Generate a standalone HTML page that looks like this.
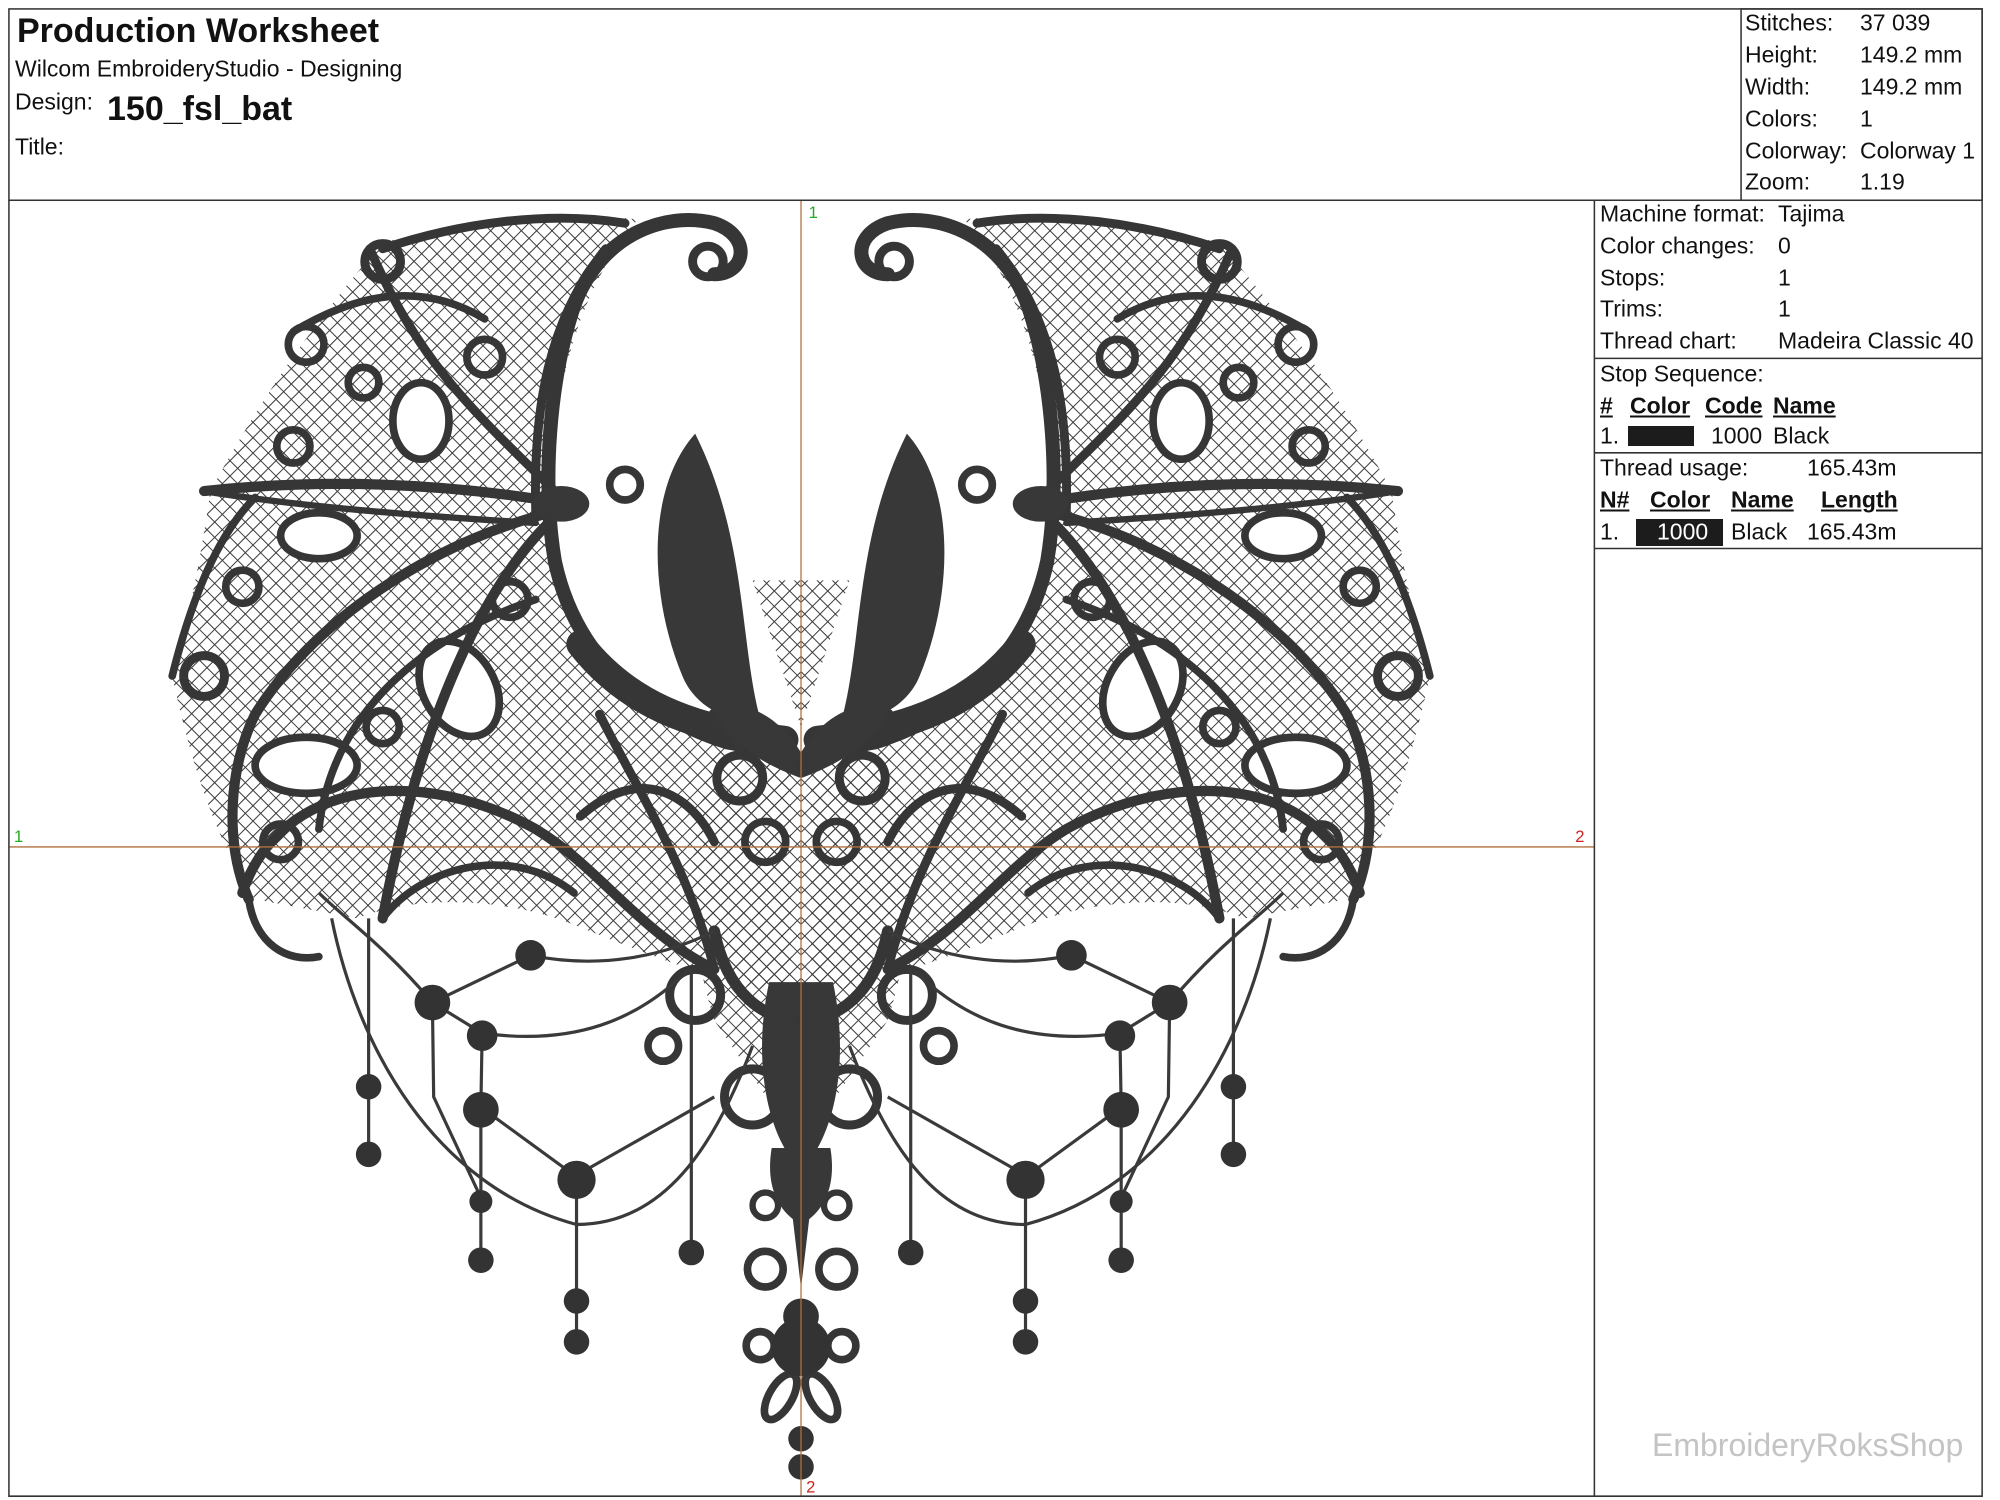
<!DOCTYPE html>
<html><head><meta charset="utf-8"><style>
html,body{margin:0;padding:0;background:#fff;}
body{width:2000px;height:1500px;position:relative;overflow:hidden;font-family:"Liberation Sans",Arial,sans-serif;color:#111;}
.t{position:absolute;white-space:nowrap;font-size:23px;line-height:23px;transform:translateY(-50%);}
.b{font-weight:bold;}
.u{text-decoration:underline;font-weight:bold;}
svg{position:absolute;left:0;top:0;}
</style></head><body>
<svg width="2000" height="1500" viewBox="0 0 1568 1176" preserveAspectRatio="none">
<defs>
<pattern id="m" width="8.5" height="8.5" patternUnits="userSpaceOnUse" patternTransform="rotate(45)">
<path d="M0 0H8.5M0 0V8.5" stroke="#3a3a3a" stroke-width="1.6" fill="none"/>
</pattern>
<g id="half">
<path d="M300,190 C360,175 440,165 500,172 C460,220 440,280 432,360 C428,450 450,520 540,575 L620,600 L620,780 C560,770 500,745 450,725 C400,705 330,700 280,720 L200,705 C170,660 150,600 135,530 C150,480 160,420 165,385 C200,320 240,260 300,190 Z" fill="url(#m)"/>
<path d="M590,455 L628,455 L628,570 Z" fill="url(#m)"/>
<path d="M560,590 C540,650 535,720 560,800 L628,900 L628,590 Z" fill="url(#m)"/>
<g fill="#fff" stroke="#363636" stroke-width="6">
<ellipse cx="250" cy="420" rx="30" ry="18"/>
<ellipse cx="360" cy="540" rx="28" ry="40" transform="rotate(-30 360 540)"/>
<ellipse cx="240" cy="600" rx="40" ry="22"/>
<ellipse cx="330" cy="330" rx="22" ry="30"/>
</g>
<g fill="none" stroke="#363636" stroke-linecap="round">
<path d="M560,215 C585,215 590,185 560,175 C520,165 470,185 450,240 C430,300 425,380 435,440 C450,510 500,560 570,582 L620,590" stroke-width="11"/>
<path d="M455,505 C490,550 540,572 615,580" stroke-width="22"/>
<path d="M475,195 C430,250 418,320 420,400" stroke-width="7"/>
<path d="M300,195 C360,175 430,165 490,175" stroke-width="7"/>
<path d="M445,395 Q300,370 160,385" stroke-width="8"/>
<path d="M160,385 Q250,400 420,410" stroke-width="5"/>
<path d="M440,400 C350,420 250,480 200,560 C180,600 175,660 195,705" stroke-width="8"/>
<path d="M445,395 C380,330 330,290 290,195" stroke-width="7"/>
<path d="M430,410 C380,460 330,560 300,720" stroke-width="8"/>
<path d="M420,470 C330,500 260,560 250,650" stroke-width="6"/>
<path d="M190,700 C220,610 330,600 420,650 C470,680 500,730 560,760" stroke-width="8"/>
<path d="M300,720 C330,680 400,660 450,700" stroke-width="6"/>
<path d="M135,530 C150,470 170,420 200,390" stroke-width="6"/>
<path d="M230,260 C280,230 330,220 380,250" stroke-width="6"/>
<path d="M470,560 C500,620 540,680 560,760" stroke-width="7"/>
<path d="M455,640 C500,600 540,620 560,660" stroke-width="7"/>
<path d="M195,705 C200,740 225,755 250,750" stroke-width="6"/>
<circle cx="555" cy="205" r="12" stroke-width="7"/>
<circle cx="300" cy="205" r="14" stroke-width="7"/>
<circle cx="240" cy="270" r="14" stroke-width="6"/>
<circle cx="230" cy="350" r="13" stroke-width="6"/>
<circle cx="160" cy="530" r="16" stroke-width="7"/>
<circle cx="190" cy="460" r="13" stroke-width="6"/>
<circle cx="300" cy="570" r="13" stroke-width="6"/>
<circle cx="490" cy="380" r="12" stroke-width="6"/>
<circle cx="380" cy="280" r="14" stroke-width="6"/>
<circle cx="285" cy="300" r="12" stroke-width="6"/>
<circle cx="400" cy="470" r="14" stroke-width="6"/>
<circle cx="220" cy="660" r="14" stroke-width="6"/>
<circle cx="580" cy="610" r="18" stroke-width="7"/>
<circle cx="600" cy="660" r="16" stroke-width="6"/>
<circle cx="545" cy="780" r="20" stroke-width="7"/>
<circle cx="520" cy="820" r="12" stroke-width="6"/>
<circle cx="590" cy="860" r="22" stroke-width="7"/>
<circle cx="600" cy="945" r="10" stroke-width="5"/>
<circle cx="600" cy="995" r="14" stroke-width="6"/>
<circle cx="596" cy="1055" r="11" stroke-width="6"/>
<ellipse cx="612" cy="1095" rx="9" ry="20" transform="rotate(30 612 1095)" stroke-width="6"/>
<path d="M560,730 C570,780 600,800 628,800" stroke-width="9"/>
<path d="M560,560 C580,570 600,590 628,600" stroke-width="9"/>
</g>
<g fill="#383838">
<ellipse cx="440" cy="395" rx="22" ry="14"/>
<path d="M545,340 C505,385 510,470 535,530 C545,555 575,570 595,560 C580,500 585,420 545,340 Z"/>
<path d="M560,560 C580,545 610,560 628,590 L628,610 C600,600 575,585 560,560 Z"/>
<path d="M603,770 C592,820 598,870 615,900 L628,1010 L628,770 Z"/>
<path d="M605,900 C600,930 610,950 628,960 L628,900 Z"/>
</g>
<g fill="none" stroke="#3a3a3a" stroke-width="2.5">
<path d="M289,720 L289,902"/>
<path d="M377,868 L377,985"/>
<path d="M452,922 L452,1048"/>
<path d="M542,760 L542,978"/>
<path d="M339,786 L416,749"/>
<path d="M339,786 L378,810 L377,868 L451,922 L560,860"/>
<path d="M260,720 C280,820 340,930 452,960 C520,960 560,900 590,820"/>
<path d="M339,786 C300,740 270,720 250,700"/>
<path d="M416,749 C470,760 520,750 560,730"/>
<path d="M378,810 C450,820 500,800 540,760"/>
<path d="M339,786 L340,860 L377,939"/>
</g>
<g fill="#333">
<circle cx="339" cy="786" r="14"/><circle cx="416" cy="749" r="12"/>
<circle cx="378" cy="812" r="12"/><circle cx="377" cy="870" r="14"/>
<circle cx="377" cy="942" r="9"/><circle cx="377" cy="988" r="10"/>
<circle cx="289" cy="852" r="10"/><circle cx="289" cy="905" r="10"/>
<circle cx="452" cy="925" r="15"/><circle cx="452" cy="1020" r="10"/>
<circle cx="452" cy="1052" r="10"/><circle cx="542" cy="982" r="10"/>
</g>
</g>
</defs>
<use href="#half"/>
<use href="#half" transform="translate(1256,0) scale(-1,1)"/>
<g fill="#333">
<circle cx="628" cy="1056" r="23"/><circle cx="628" cy="1032" r="14"/>
<circle cx="628" cy="1128" r="10"/><circle cx="628" cy="1150" r="10"/>
</g>
<line x1="628" y1="157" x2="628" y2="1173" stroke="#b07040" stroke-width="1"/>
<line x1="7" y1="664" x2="1250" y2="664" stroke="#b07040" stroke-width="1"/>
<g fill="none" stroke="#333" stroke-width="1.2">
<rect x="7" y="7" width="1547" height="150"/>
<rect x="1365" y="7" width="189" height="150"/>
<path d="M7,157 V1173 H1554 V157 M1250,157 V1173 M1250,281 H1554 M1250,355 H1554 M1250,430 H1554"/>
</g>
<text x="634" y="171" fill="#2a2" font-size="13" font-family="Liberation Sans">1</text>
<text x="11" y="660" fill="#2a2" font-size="13" font-family="Liberation Sans">1</text>
<text x="1235" y="660" fill="#c22" font-size="13" font-family="Liberation Sans">2</text>
<text x="632" y="1170" fill="#c22" font-size="13" font-family="Liberation Sans">2</text>
</svg>

<div class="t b" style="left:17px;top:31px;font-size:34px;line-height:34px">Production Worksheet</div>
<div class="t" style="left:15px;top:69px">Wilcom EmbroideryStudio - Designing</div>
<div class="t" style="left:15px;top:102px">Design:</div>
<div class="t b" style="left:107px;top:109px;font-size:34px;line-height:34px">150_fsl_bat</div>
<div class="t" style="left:15px;top:147px">Title:</div>

<div class="t" style="left:1745px;top:23px">Stitches:</div><div class="t" style="left:1860px;top:23px">37 039</div>
<div class="t" style="left:1745px;top:55px">Height:</div><div class="t" style="left:1860px;top:55px">149.2 mm</div>
<div class="t" style="left:1745px;top:87px">Width:</div><div class="t" style="left:1860px;top:87px">149.2 mm</div>
<div class="t" style="left:1745px;top:119px">Colors:</div><div class="t" style="left:1860px;top:119px">1</div>
<div class="t" style="left:1745px;top:151px">Colorway:</div><div class="t" style="left:1860px;top:151px">Colorway 1</div>
<div class="t" style="left:1745px;top:182px">Zoom:</div><div class="t" style="left:1860px;top:182px">1.19</div>

<div class="t" style="left:1600px;top:214px">Machine format:</div><div class="t" style="left:1778px;top:214px">Tajima</div>
<div class="t" style="left:1600px;top:246px">Color changes:</div><div class="t" style="left:1778px;top:246px">0</div>
<div class="t" style="left:1600px;top:278px">Stops:</div><div class="t" style="left:1778px;top:278px">1</div>
<div class="t" style="left:1600px;top:309px">Trims:</div><div class="t" style="left:1778px;top:309px">1</div>
<div class="t" style="left:1600px;top:341px">Thread chart:</div><div class="t" style="left:1778px;top:341px">Madeira Classic 40</div>

<div class="t" style="left:1600px;top:374px">Stop Sequence:</div>
<div class="t u" style="left:1600px;top:406px">#</div>
<div class="t u" style="left:1630px;top:406px">Color</div>
<div class="t u" style="left:1705px;top:406px">Code</div>
<div class="t u" style="left:1773px;top:406px">Name</div>
<div class="t" style="left:1600px;top:436px">1.</div>
<div style="position:absolute;left:1628px;top:426px;width:66px;height:20px;background:#1c1c1c"></div>
<div class="t" style="left:1711px;top:436px">1000</div>
<div class="t" style="left:1773px;top:436px">Black</div>

<div class="t" style="left:1600px;top:468px">Thread usage:</div><div class="t" style="left:1807px;top:468px">165.43m</div>
<div class="t u" style="left:1600px;top:500px">N#</div>
<div class="t u" style="left:1650px;top:500px">Color</div>
<div class="t u" style="left:1731px;top:500px">Name</div>
<div class="t u" style="left:1821px;top:500px">Length</div>
<div class="t" style="left:1600px;top:532px">1.</div>
<div style="position:absolute;left:1636px;top:519px;width:87px;height:27px;background:#1c1c1c"></div>
<div class="t" style="left:1657px;top:532px;color:#fff">1000</div>
<div class="t" style="left:1731px;top:532px">Black</div>
<div class="t" style="left:1807px;top:532px">165.43m</div>

<div class="t" style="left:1652px;top:1445px;font-size:32px;line-height:32px;color:#c4c4c4">EmbroideryRoksShop</div>
</body></html>
